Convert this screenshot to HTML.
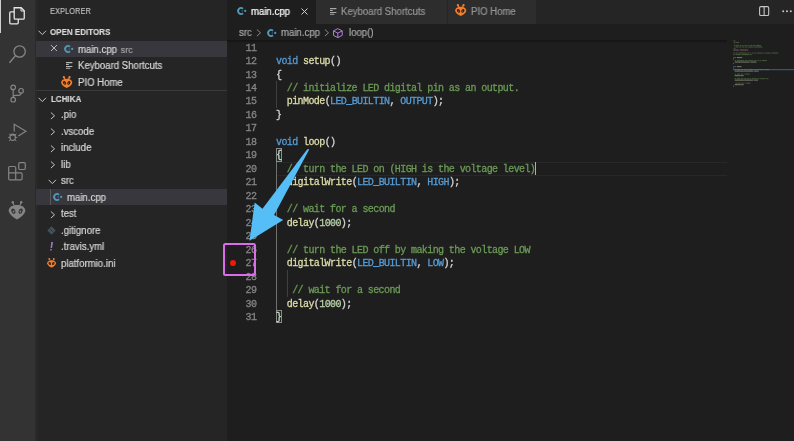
<!DOCTYPE html><html><head><meta charset="utf-8"><style>
*{margin:0;padding:0;box-sizing:border-box}
html,body{width:794px;height:441px;overflow:hidden;background:#1e1e1e}
body{position:relative;font-family:"Liberation Sans",sans-serif}
.st,.hdr,.mono,.gs{will-change:transform}
.abs{position:absolute}
svg{position:absolute;overflow:visible}
.tab{position:absolute;top:0;height:23.5px;background:#2d2d2d}
.st{position:absolute;white-space:nowrap;color:#d8d8d8;font-size:10px;line-height:12px;transform-origin:0 0;transform:scaleX(0.96);-webkit-text-stroke:0.2px}
.hdr{position:absolute;white-space:nowrap;color:#dadada;font-size:8.8px;font-weight:bold;line-height:10px;transform-origin:0 0;transform:scaleX(0.91);-webkit-text-stroke:0.15px}
.row{position:absolute;left:36px;width:191px;height:16.42px}
.ln{position:absolute;left:227px;width:29.3px;text-align:right;color:#858585;white-space:pre}
.cd{position:absolute;left:276.3px;white-space:pre;color:#d4d4d4}
.mono{font-family:"Liberation Mono",monospace;font-size:10px;letter-spacing:-0.6px;line-height:13.47px;height:13.47px;padding-top:1px;-webkit-text-stroke:0.3px}
.k{color:#569cd6}.f{color:#dcdcaa}.c{color:#6a9955}.m{color:#569cd6}.n{color:#b5cea8}
</style></head><body>
<div class="abs" style="left:0;top:0;width:36px;height:441px;background:#333333"></div>
<div class="abs" style="left:0;top:0;width:1.3px;height:33px;background:#d0d0d0"></div>
<div class="abs" style="left:36px;top:0;width:191px;height:441px;background:#252526"></div>
<div class="abs" style="left:35px;top:0;width:2px;height:441px;background:#2a2a2a"></div>
<div class="abs" style="left:227px;top:0;width:567px;height:23.5px;background:#252526"></div>
<div class="tab" style="left:227px;width:89px;background:#1e1e1e"></div>
<div class="tab" style="left:316px;width:131px"></div>
<div class="tab" style="left:448px;width:88px"></div>
<div class="abs gs" style="left:50.4px;top:5.6px;font-size:9px;color:#c4c4c4;line-height:10px;white-space:nowrap;transform-origin:0 0;transform:scaleX(0.835);-webkit-text-stroke:0.1px">EXPLORER</div>
<svg style="left:38.3px;top:29.5px" width="9" height="6" viewBox="0 0 9 6"><path d="M0.6 0.8 L4.3 4.6 L8 0.8" fill="none" stroke="#c5c5c5" stroke-width="1"/></svg>
<div class="hdr" style="left:50.4px;top:27.3px">OPEN EDITORS</div>
<div class="row" style="top:40.60px;background:#37373d"></div>
<svg style="left:50.1px;top:44px" width="8" height="8" viewBox="0 0 8 8"><path d="M1 1.1L6.9 7M6.9 1.1L1 7" stroke="#c5c5c5" stroke-width="0.95"/></svg>
<svg style="left:64.2px;top:43.8px" width="10" height="10" viewBox="0 0 10 10"><path d="M6 2.74 A2.95 2.95 0 1 0 6 7.26" fill="none" stroke="#519aba" stroke-width="1.8"/><circle cx="5.3" cy="5" r="0.8" fill="#519aba" opacity="0.55"/><circle cx="8.2" cy="4.9" r="1.1" fill="#519aba"/></svg>
<div class="st" style="left:77.9px;top:43.60px">main.cpp<span style="color:#a0a0a0;font-size:9.2px;margin-left:4px">src</span></div>
<svg style="left:66px;top:62.37px" width="7" height="7" viewBox="0 0 7 7"><path d="M0 0.6h6.4M0 2.5h2.8M0 4.4h6.4M0 6.3h4.3" stroke="#b8b8b8" stroke-width="1.05"/></svg>
<div class="st" style="left:77.9px;top:60.07px">Keyboard Shortcuts</div>
<svg style="left:60.9px;top:75.5px" width="11.40" height="12.20" viewBox="0 0 12 13"><path d="M3 1.4 L4 3.4 M9 1.4 L8 3.4" stroke="#f08030" stroke-width="1.3"/><circle cx="3" cy="1.3" r="1.2" fill="#f08030"/><circle cx="9" cy="1.3" r="1.2" fill="#f08030"/><path d="M6 3 C9.6 3 11.9 4.8 11.9 7 C11.9 9.4 8.6 11.9 6 12.8 C3.4 11.9 0.1 9.4 0.1 7 C0.1 4.8 2.4 3 6 3Z" fill="#f08030"/><ellipse cx="3.7" cy="7.3" rx="1.5" ry="2.1" fill="#2a1a12" transform="rotate(-35 3.7 7.3)"/><ellipse cx="8.3" cy="7.3" rx="1.5" ry="2.1" fill="#2a1a12" transform="rotate(35 8.3 7.3)"/><circle cx="3.9" cy="7.6" r="0.6" fill="#c06a2a"/><circle cx="8.1" cy="7.6" r="0.6" fill="#c06a2a"/></svg>
<div class="st" style="left:77.9px;top:76.54px">PIO Home</div>
<div class="abs" style="left:36px;top:90.01px;width:191px;height:1px;background:#3a3a3a"></div>
<svg style="left:38.3px;top:96.80999999999999px" width="9" height="6" viewBox="0 0 9 6"><path d="M0.6 0.8 L4.3 4.6 L8 0.8" fill="none" stroke="#c5c5c5" stroke-width="1"/></svg>
<div class="hdr" style="left:50.6px;top:94.41px">LCHIKA</div>
<svg style="left:50px;top:111.97999999999999px" width="6" height="8" viewBox="0 0 6 8"><path d="M0.9 0.5 L4.5 3.8 L0.9 7.1" fill="none" stroke="#c5c5c5" stroke-width="1"/></svg>
<div class="st" style="left:60.9px;top:109.48px">.pio</div>
<svg style="left:50px;top:128.45px" width="6" height="8" viewBox="0 0 6 8"><path d="M0.9 0.5 L4.5 3.8 L0.9 7.1" fill="none" stroke="#c5c5c5" stroke-width="1"/></svg>
<div class="st" style="left:60.9px;top:125.95px">.vscode</div>
<svg style="left:50px;top:144.92px" width="6" height="8" viewBox="0 0 6 8"><path d="M0.9 0.5 L4.5 3.8 L0.9 7.1" fill="none" stroke="#c5c5c5" stroke-width="1"/></svg>
<div class="st" style="left:60.9px;top:142.42px">include</div>
<svg style="left:50px;top:161.39px" width="6" height="8" viewBox="0 0 6 8"><path d="M0.9 0.5 L4.5 3.8 L0.9 7.1" fill="none" stroke="#c5c5c5" stroke-width="1"/></svg>
<div class="st" style="left:60.9px;top:158.89px">lib</div>
<svg style="left:50px;top:210.79999999999998px" width="6" height="8" viewBox="0 0 6 8"><path d="M0.9 0.5 L4.5 3.8 L0.9 7.1" fill="none" stroke="#c5c5c5" stroke-width="1"/></svg>
<div class="st" style="left:60.9px;top:208.30px">test</div>
<svg style="left:48.2px;top:178.55999999999997px" width="9" height="6" viewBox="0 0 9 6"><path d="M0.6 0.8 L4.3 4.6 L8 0.8" fill="none" stroke="#c5c5c5" stroke-width="1"/></svg>
<div class="st" style="left:60.9px;top:175.36px">src</div>
<div class="row" style="top:188.83px;background:#37373d"></div>
<div class="abs" style="left:50px;top:188.83px;width:0.8px;height:16.4px;background:#585858"></div>
<svg style="left:53.4px;top:192.23px" width="10" height="10" viewBox="0 0 10 10"><path d="M6 2.74 A2.95 2.95 0 1 0 6 7.26" fill="none" stroke="#519aba" stroke-width="1.8"/><circle cx="5.3" cy="5" r="0.8" fill="#519aba" opacity="0.55"/><circle cx="8.2" cy="4.9" r="1.1" fill="#519aba"/></svg>
<div class="st" style="left:67px;top:191.83px">main.cpp</div>
<svg style="left:47px;top:226.27px" width="9" height="9" viewBox="0 0 9 9"><path d="M4.5 0.3 L8.7 4.5 L4.5 8.7 L0.3 4.5Z" fill="#41535b"/><path d="M3 3 L5.5 5.5" stroke="#252526" stroke-width="0.8"/></svg>
<div class="st" style="left:60.9px;top:224.77px">.gitignore</div>
<svg style="left:49.3px;top:241.44px" width="6" height="11" viewBox="0 0 6 11"><path d="M2.2 1 H4 L3.1 6.9 H1.6 Z" fill="#a074c4"/><path d="M1.3 7.9 H2.9 L2.7 9.6 H1.1 Z" fill="#a074c4"/></svg>
<div class="st" style="left:60.9px;top:241.24px">.travis.yml</div>
<svg style="left:46.8px;top:258.31px" width="9.12" height="9.76" viewBox="0 0 12 13"><path d="M3 1.4 L4 3.4 M9 1.4 L8 3.4" stroke="#f08030" stroke-width="1.3"/><circle cx="3" cy="1.3" r="1.2" fill="#f08030"/><circle cx="9" cy="1.3" r="1.2" fill="#f08030"/><path d="M6 3 C9.6 3 11.9 4.8 11.9 7 C11.9 9.4 8.6 11.9 6 12.8 C3.4 11.9 0.1 9.4 0.1 7 C0.1 4.8 2.4 3 6 3Z" fill="#f08030"/><ellipse cx="3.7" cy="7.3" rx="1.5" ry="2.1" fill="#2a1a12" transform="rotate(-35 3.7 7.3)"/><ellipse cx="8.3" cy="7.3" rx="1.5" ry="2.1" fill="#2a1a12" transform="rotate(35 8.3 7.3)"/><circle cx="3.9" cy="7.6" r="0.6" fill="#c06a2a"/><circle cx="8.1" cy="7.6" r="0.6" fill="#c06a2a"/></svg>
<div class="st" style="left:60.9px;top:257.71px">platformio.ini</div>
<svg style="left:237.4px;top:6.3px" width="10" height="10" viewBox="0 0 10 10"><path d="M6 2.74 A2.95 2.95 0 1 0 6 7.26" fill="none" stroke="#519aba" stroke-width="1.8"/><circle cx="5.3" cy="5" r="0.8" fill="#519aba" opacity="0.55"/><circle cx="8.2" cy="4.9" r="1.1" fill="#519aba"/></svg>
<div class="st" style="left:251px;top:6.2px;color:#ffffff">main.cpp</div>
<svg style="left:300.5px;top:8px" width="7" height="7" viewBox="0 0 7 7"><path d="M0.5 0.5L6.5 6.5M6.5 0.5L0.5 6.5" stroke="#d0d0d0" stroke-width="1"/></svg>
<svg style="left:329.7px;top:8px" width="7" height="7" viewBox="0 0 7 7"><path d="M0 0.6h6.4M0 2.5h2.8M0 4.4h6.4M0 6.3h4.3" stroke="#a8a8a8" stroke-width="1.05"/></svg>
<div class="st" style="left:341px;top:6.3px;color:#969696">Keyboard Shortcuts</div>
<svg style="left:455.3px;top:3.9px" width="11.40" height="12.20" viewBox="0 0 12 13"><path d="M3 1.4 L4 3.4 M9 1.4 L8 3.4" stroke="#f08030" stroke-width="1.3"/><circle cx="3" cy="1.3" r="1.2" fill="#f08030"/><circle cx="9" cy="1.3" r="1.2" fill="#f08030"/><path d="M6 3 C9.6 3 11.9 4.8 11.9 7 C11.9 9.4 8.6 11.9 6 12.8 C3.4 11.9 0.1 9.4 0.1 7 C0.1 4.8 2.4 3 6 3Z" fill="#f08030"/><ellipse cx="3.7" cy="7.3" rx="1.5" ry="2.1" fill="#2a1a12" transform="rotate(-35 3.7 7.3)"/><ellipse cx="8.3" cy="7.3" rx="1.5" ry="2.1" fill="#2a1a12" transform="rotate(35 8.3 7.3)"/><circle cx="3.9" cy="7.6" r="0.6" fill="#c06a2a"/><circle cx="8.1" cy="7.6" r="0.6" fill="#c06a2a"/></svg>
<div class="st" style="left:471.3px;top:6.3px;color:#969696">PIO Home</div>
<svg style="left:758.6px;top:5.9px" width="11" height="11" viewBox="0 0 11 11"><rect x="0.6" y="0.6" width="9.1" height="8.9" rx="1.3" fill="none" stroke="#c5c5c5" stroke-width="1.1"/><path d="M5.15 0.6V9.5" stroke="#c5c5c5" stroke-width="1.1"/></svg>
<svg style="left:782px;top:10px" width="11" height="3" viewBox="0 0 11 3"><circle cx="1.2" cy="1.2" r="1" fill="#c5c5c5"/><circle cx="5" cy="1.2" r="1" fill="#c5c5c5"/><circle cx="8.8" cy="1.2" r="1" fill="#c5c5c5"/></svg>
<div class="st" style="left:238.8px;top:26.6px;color:#a9a9a9">src</div>
<svg style="left:256px;top:28.5px" width="6" height="8" viewBox="0 0 6 8"><path d="M0.9 0.5 L4.5 3.8 L0.9 7.1" fill="none" stroke="#8a8a8a" stroke-width="1"/></svg>
<svg style="left:266.8px;top:28px" width="10" height="10" viewBox="0 0 10 10"><path d="M6 2.74 A2.95 2.95 0 1 0 6 7.26" fill="none" stroke="#519aba" stroke-width="1.8"/><circle cx="5.3" cy="5" r="0.8" fill="#519aba" opacity="0.55"/><circle cx="8.2" cy="4.9" r="1.1" fill="#519aba"/></svg>
<div class="st" style="left:280.5px;top:26.6px;color:#a9a9a9">main.cpp</div>
<svg style="left:324px;top:28.5px" width="6" height="8" viewBox="0 0 6 8"><path d="M0.9 0.5 L4.5 3.8 L0.9 7.1" fill="none" stroke="#8a8a8a" stroke-width="1"/></svg>
<svg style="left:333px;top:28px" width="10" height="10" viewBox="0 0 10 10"><path d="M4.8 0.6 L9.2 2.9 V7.4 L4.8 9.6 L0.5 7.4 V2.9Z M0.5 2.9 L4.8 5.1 L9.2 2.9 M4.8 5.1V9.6" fill="none" stroke="#b180d7" stroke-width="1"/></svg>
<div class="st" style="left:348.5px;top:26.6px;color:#a9a9a9">loop()</div>
<div class="abs" style="left:227px;top:40.4px;width:500px;height:2.6px;background:linear-gradient(#151515,#171717 45%,#1e1e1e)"></div>
<div class="abs" style="left:277px;top:162.43px;width:450px;height:1px;background:#282828"></div>
<div class="abs" style="left:277px;top:174.63px;width:450px;height:1px;background:#282828"></div>
<div class="abs" style="left:276.3px;top:81.01px;width:1px;height:26.94px;background:#404040"></div>
<div class="abs" style="left:276.3px;top:161.83px;width:1px;height:148.17px;background:#707070"></div>
<div class="abs" style="left:286.9px;top:269.59px;width:1px;height:26.94px;background:#404040"></div>
<div class="abs" style="left:275.7px;top:148.06px;width:6.4px;height:13.6px;border:1px solid #8c8c8c;background:#0f2a16"></div>
<div class="abs" style="left:275.7px;top:309.70px;width:6.4px;height:13.6px;border:1px solid #8c8c8c;background:#0f2a16"></div>
<div class="ln mono" style="top:40.60px">11</div>
<div class="ln mono" style="top:54.07px">12</div>
<div class="cd mono" style="top:54.07px"><span class="k">void</span> <span class="f">setup</span>()</div>
<div class="ln mono" style="top:67.54px">13</div>
<div class="cd mono" style="top:67.54px">{</div>
<div class="ln mono" style="top:81.01px">14</div>
<div class="cd mono" style="top:81.01px">  <span class="c">// initialize LED digital pin as an output.</span></div>
<div class="ln mono" style="top:94.48px">15</div>
<div class="cd mono" style="top:94.48px">  <span class="f">pinMode</span>(<span class="m">LED_BUILTIN</span>, <span class="m">OUTPUT</span>);</div>
<div class="ln mono" style="top:107.95px">16</div>
<div class="cd mono" style="top:107.95px">}</div>
<div class="ln mono" style="top:121.42px">17</div>
<div class="ln mono" style="top:134.89px">18</div>
<div class="cd mono" style="top:134.89px"><span class="k">void</span> <span class="f">loop</span>()</div>
<div class="ln mono" style="top:148.36px">19</div>
<div class="cd mono" style="top:148.36px">{</div>
<div class="ln mono" style="top:161.83px">20</div>
<div class="cd mono" style="top:161.83px">  <span class="c">// turn the LED on (HIGH is the voltage level)</span></div>
<div class="ln mono" style="top:175.30px">21</div>
<div class="cd mono" style="top:175.30px">  <span class="f">digitalWrite</span>(<span class="m">LED_BUILTIN</span>, <span class="m">HIGH</span>);</div>
<div class="ln mono" style="top:188.77px">22</div>
<div class="ln mono" style="top:202.24px">23</div>
<div class="cd mono" style="top:202.24px">  <span class="c">// wait for a second</span></div>
<div class="ln mono" style="top:215.71px">24</div>
<div class="cd mono" style="top:215.71px">  <span class="f">delay</span>(<span class="n">1000</span>);</div>
<div class="ln mono" style="top:229.18px">25</div>
<div class="ln mono" style="top:242.65px">26</div>
<div class="cd mono" style="top:242.65px">  <span class="c">// turn the LED off by making the voltage LOW</span></div>
<div class="ln mono" style="top:256.12px">27</div>
<div class="cd mono" style="top:256.12px">  <span class="f">digitalWrite</span>(<span class="m">LED_BUILTIN</span>, <span class="m">LOW</span>);</div>
<div class="ln mono" style="top:269.59px">28</div>
<div class="ln mono" style="top:283.06px">29</div>
<div class="cd mono" style="top:283.06px">   <span class="c">// wait for a second</span></div>
<div class="ln mono" style="top:296.53px">30</div>
<div class="cd mono" style="top:296.53px">  <span class="f">delay</span>(<span class="n">1000</span>);</div>
<div class="ln mono" style="top:310.00px">31</div>
<div class="cd mono" style="top:310.00px">}</div>
<div class="abs" style="left:534.5px;top:162.43px;width:1.2px;height:12.4px;background:#aeafad"></div>
<svg style="left:8px;top:6px" width="18" height="20" viewBox="0 0 18 20"><path d="M6.2 1.75 H13.2 L16.25 4.8 V12.15 Q16.25 13.15 15.25 13.15 H7.2 Q6.2 13.15 6.2 12.15 Z" fill="none" stroke="#e6e6e6" stroke-width="1.3"/><path d="M13 1.75 V5 H16.25" fill="none" stroke="#e6e6e6" stroke-width="1"/><path d="M6.2 5.85 H2.75 Q1.75 5.85 1.75 6.85 V16.85 Q1.75 17.85 2.75 17.85 H9.25 Q10.25 17.85 10.25 16.85 V13.15" fill="none" stroke="#e6e6e6" stroke-width="1.3"/></svg>
<svg style="left:8px;top:45px" width="20" height="20" viewBox="0 0 20 20"><circle cx="11.6" cy="6.5" r="5.7" fill="none" stroke="#858585" stroke-width="1.3"/><path d="M7.5 10.6 L1.5 17.8" stroke="#858585" stroke-width="1.4"/></svg>
<svg style="left:8px;top:83px" width="20" height="22" viewBox="0 0 20 22"><circle cx="5.2" cy="4.4" r="2.3" fill="none" stroke="#858585" stroke-width="1.2"/><circle cx="5.2" cy="16.7" r="2.3" fill="none" stroke="#858585" stroke-width="1.2"/><circle cx="13.1" cy="7.8" r="2.3" fill="none" stroke="#858585" stroke-width="1.2"/><path d="M5.2 6.7 V14.4 M13.1 10.1 Q13.1 12.3 10.6 12.3 H7.4 Q5.4 12.3 5.2 14" fill="none" stroke="#858585" stroke-width="1.2"/></svg>
<svg style="left:7px;top:122px" width="22" height="22" viewBox="0 0 22 22"><path d="M7.2 9.6 V2.3 L18.9 9.2 L11.3 14.1" fill="none" stroke="#858585" stroke-width="1.2"/><ellipse cx="5.7" cy="15.3" rx="2.7" ry="3.2" fill="none" stroke="#858585" stroke-width="1.1"/><path d="M3.4 13.8 Q5.7 12.2 8 13.8 M2 11.8 L3.5 13 M9.4 11.8 L7.9 13 M1.2 15.4 H3 M8.4 15.4 H10.2 M2 19 L3.4 17.8 M9.4 19 L8 17.8" fill="none" stroke="#858585" stroke-width="1"/></svg>
<svg style="left:7px;top:161px" width="22" height="22" viewBox="0 0 22 22"><path d="M1.7 6.7 Q1.7 5.5 2.9 5.5 H7.5 Q8.7 5.5 8.7 6.7 V11.9 H13.9 Q15.1 11.9 15.1 13.1 V17.7 Q15.1 18.9 13.9 18.9 H2.9 Q1.7 18.9 1.7 17.7 Z M1.7 11.9 H8.7 V18.9" fill="none" stroke="#858585" stroke-width="1.2"/><rect x="11.7" y="1.7" width="6.6" height="6.8" rx="1.2" fill="none" stroke="#858585" stroke-width="1.2"/></svg>
<svg style="left:9px;top:200px" width="18" height="20" viewBox="0 0 18 20"><path d="M3.8 2.4 L5 5.4 M12.2 2.4 L11 5.4" stroke="#858585" stroke-width="1.1"/><circle cx="3.8" cy="2.3" r="1.2" fill="#858585"/><circle cx="12.2" cy="2.3" r="1.2" fill="#858585"/><path d="M8 4.9 C13 4.9 16.3 7.3 16.3 10.6 C16.3 14 11.6 17.8 8 19.5 C4.4 17.8 -0.3 14 -0.3 10.6 C-0.3 7.3 3 4.9 8 4.9Z" fill="#858585"/><ellipse cx="4.4" cy="11.2" rx="1.9" ry="2.7" fill="#333333" transform="rotate(-30 4.4 11.2)"/><ellipse cx="11.6" cy="11.2" rx="1.9" ry="2.7" fill="#333333" transform="rotate(30 11.6 11.2)"/><circle cx="4.6" cy="11.5" r="0.9" fill="#858585"/><circle cx="11.4" cy="11.5" r="0.9" fill="#858585"/></svg>
<svg style="left:0;top:0" width="794" height="441" viewBox="0 0 794 441"><rect x="733" y="69.01" width="61" height="1.2" fill="#2b64a0" opacity="0.85"/><rect x="733.20" y="40.45" width="2.25" height="1.1" fill="#6a9955" opacity="0.45"/><rect x="733.95" y="41.96" width="0.75" height="1.1" fill="#6a9955" opacity="0.45"/><rect x="735.45" y="41.96" width="3.75" height="1.1" fill="#6a9955" opacity="0.45"/><rect x="733.95" y="43.46" width="0.75" height="1.1" fill="#6a9955" opacity="0.45"/><rect x="733.95" y="44.97" width="0.75" height="1.1" fill="#6a9955" opacity="0.45"/><rect x="735.45" y="44.97" width="3.75" height="1.1" fill="#6a9955" opacity="0.45"/><rect x="739.95" y="44.97" width="1.50" height="1.1" fill="#6a9955" opacity="0.45"/><rect x="742.20" y="44.97" width="1.50" height="1.1" fill="#6a9955" opacity="0.45"/><rect x="744.45" y="44.97" width="2.25" height="1.1" fill="#6a9955" opacity="0.45"/><rect x="747.45" y="44.97" width="1.50" height="1.1" fill="#6a9955" opacity="0.45"/><rect x="749.70" y="44.97" width="2.25" height="1.1" fill="#6a9955" opacity="0.45"/><rect x="752.70" y="44.97" width="2.25" height="1.1" fill="#6a9955" opacity="0.45"/><rect x="755.70" y="44.97" width="5.25" height="1.1" fill="#6a9955" opacity="0.45"/><rect x="733.95" y="46.47" width="0.75" height="1.1" fill="#6a9955" opacity="0.45"/><rect x="735.45" y="46.47" width="3.00" height="1.1" fill="#6a9955" opacity="0.45"/><rect x="739.20" y="46.47" width="2.25" height="1.1" fill="#6a9955" opacity="0.45"/><rect x="742.20" y="46.47" width="2.25" height="1.1" fill="#6a9955" opacity="0.45"/><rect x="745.20" y="46.47" width="2.25" height="1.1" fill="#6a9955" opacity="0.45"/><rect x="748.20" y="46.47" width="5.25" height="1.1" fill="#6a9955" opacity="0.45"/><rect x="754.20" y="46.47" width="8.25" height="1.1" fill="#6a9955" opacity="0.45"/><rect x="733.95" y="47.98" width="1.50" height="1.1" fill="#6a9955" opacity="0.45"/><rect x="733.20" y="49.49" width="6.00" height="1.1" fill="#c586c0" opacity="0.45"/><rect x="739.95" y="49.49" width="8.25" height="1.1" fill="#ce9178" opacity="0.45"/><rect x="733.20" y="52.50" width="1.50" height="1.1" fill="#6a9955" opacity="0.45"/><rect x="735.45" y="52.50" width="2.25" height="1.1" fill="#6a9955" opacity="0.45"/><rect x="738.45" y="52.50" width="8.25" height="1.1" fill="#6a9955" opacity="0.45"/><rect x="747.45" y="52.50" width="1.50" height="1.1" fill="#6a9955" opacity="0.45"/><rect x="749.70" y="52.50" width="1.50" height="1.1" fill="#6a9955" opacity="0.45"/><rect x="751.95" y="52.50" width="1.50" height="1.1" fill="#6a9955" opacity="0.45"/><rect x="754.20" y="52.50" width="2.25" height="1.1" fill="#6a9955" opacity="0.45"/><rect x="757.20" y="52.50" width="5.25" height="1.1" fill="#6a9955" opacity="0.45"/><rect x="763.20" y="52.50" width="1.50" height="1.1" fill="#6a9955" opacity="0.45"/><rect x="765.45" y="52.50" width="5.25" height="1.1" fill="#6a9955" opacity="0.45"/><rect x="771.45" y="52.50" width="6.75" height="1.1" fill="#6a9955" opacity="0.45"/><rect x="733.20" y="54.00" width="1.50" height="1.1" fill="#6a9955" opacity="0.45"/><rect x="735.45" y="54.00" width="5.25" height="1.1" fill="#6a9955" opacity="0.45"/><rect x="741.45" y="54.00" width="8.25" height="1.1" fill="#6a9955" opacity="0.45"/><rect x="750.45" y="54.00" width="1.50" height="1.1" fill="#6a9955" opacity="0.45"/><rect x="733.20" y="57.02" width="3.00" height="1.1" fill="#569cd6" opacity="0.45"/><rect x="736.95" y="57.02" width="3.75" height="1.1" fill="#dcdcaa" opacity="0.45"/><rect x="740.70" y="57.02" width="1.50" height="1.1" fill="#d4d4d4" opacity="0.45"/><rect x="733.20" y="58.52" width="0.75" height="1.1" fill="#d4d4d4" opacity="0.45"/><rect x="734.70" y="60.03" width="1.50" height="1.1" fill="#6a9955" opacity="0.45"/><rect x="736.95" y="60.03" width="7.50" height="1.1" fill="#6a9955" opacity="0.45"/><rect x="745.20" y="60.03" width="2.25" height="1.1" fill="#6a9955" opacity="0.45"/><rect x="748.20" y="60.03" width="5.25" height="1.1" fill="#6a9955" opacity="0.45"/><rect x="754.20" y="60.03" width="2.25" height="1.1" fill="#6a9955" opacity="0.45"/><rect x="757.20" y="60.03" width="1.50" height="1.1" fill="#6a9955" opacity="0.45"/><rect x="759.45" y="60.03" width="1.50" height="1.1" fill="#6a9955" opacity="0.45"/><rect x="761.70" y="60.03" width="5.25" height="1.1" fill="#6a9955" opacity="0.45"/><rect x="734.70" y="61.53" width="5.25" height="1.1" fill="#dcdcaa" opacity="0.45"/><rect x="739.95" y="61.53" width="0.75" height="1.1" fill="#d4d4d4" opacity="0.45"/><rect x="740.70" y="61.53" width="8.25" height="1.1" fill="#d8d8c0" opacity="0.45"/><rect x="748.95" y="61.53" width="0.75" height="1.1" fill="#d4d4d4" opacity="0.45"/><rect x="750.45" y="61.53" width="4.50" height="1.1" fill="#d8d8c0" opacity="0.45"/><rect x="754.95" y="61.53" width="1.50" height="1.1" fill="#d4d4d4" opacity="0.45"/><rect x="733.20" y="63.04" width="0.75" height="1.1" fill="#d4d4d4" opacity="0.45"/><rect x="733.20" y="66.05" width="3.00" height="1.1" fill="#569cd6" opacity="0.45"/><rect x="736.95" y="66.05" width="3.00" height="1.1" fill="#dcdcaa" opacity="0.45"/><rect x="739.95" y="66.05" width="1.50" height="1.1" fill="#d4d4d4" opacity="0.45"/><rect x="733.20" y="67.56" width="0.75" height="1.1" fill="#d4d4d4" opacity="0.45"/><rect x="734.70" y="69.06" width="1.50" height="1.1" fill="#6a9955" opacity="0.45"/><rect x="736.95" y="69.06" width="3.00" height="1.1" fill="#6a9955" opacity="0.45"/><rect x="740.70" y="69.06" width="2.25" height="1.1" fill="#6a9955" opacity="0.45"/><rect x="743.70" y="69.06" width="2.25" height="1.1" fill="#6a9955" opacity="0.45"/><rect x="746.70" y="69.06" width="1.50" height="1.1" fill="#6a9955" opacity="0.45"/><rect x="748.95" y="69.06" width="3.75" height="1.1" fill="#6a9955" opacity="0.45"/><rect x="753.45" y="69.06" width="1.50" height="1.1" fill="#6a9955" opacity="0.45"/><rect x="755.70" y="69.06" width="2.25" height="1.1" fill="#6a9955" opacity="0.45"/><rect x="758.70" y="69.06" width="5.25" height="1.1" fill="#6a9955" opacity="0.45"/><rect x="764.70" y="69.06" width="4.50" height="1.1" fill="#6a9955" opacity="0.45"/><rect x="734.70" y="70.57" width="9.00" height="1.1" fill="#dcdcaa" opacity="0.45"/><rect x="743.70" y="70.57" width="0.75" height="1.1" fill="#d4d4d4" opacity="0.45"/><rect x="744.45" y="70.57" width="8.25" height="1.1" fill="#d8d8c0" opacity="0.45"/><rect x="752.70" y="70.57" width="0.75" height="1.1" fill="#d4d4d4" opacity="0.45"/><rect x="754.20" y="70.57" width="3.00" height="1.1" fill="#d8d8c0" opacity="0.45"/><rect x="757.20" y="70.57" width="1.50" height="1.1" fill="#d4d4d4" opacity="0.45"/><rect x="734.70" y="73.58" width="1.50" height="1.1" fill="#6a9955" opacity="0.45"/><rect x="736.95" y="73.58" width="3.00" height="1.1" fill="#6a9955" opacity="0.45"/><rect x="740.70" y="73.58" width="2.25" height="1.1" fill="#6a9955" opacity="0.45"/><rect x="743.70" y="73.58" width="0.75" height="1.1" fill="#6a9955" opacity="0.45"/><rect x="745.20" y="73.58" width="4.50" height="1.1" fill="#6a9955" opacity="0.45"/><rect x="734.70" y="75.09" width="3.75" height="1.1" fill="#dcdcaa" opacity="0.45"/><rect x="738.45" y="75.09" width="0.75" height="1.1" fill="#d4d4d4" opacity="0.45"/><rect x="739.20" y="75.09" width="3.00" height="1.1" fill="#b5cea8" opacity="0.45"/><rect x="742.20" y="75.09" width="1.50" height="1.1" fill="#d4d4d4" opacity="0.45"/><rect x="734.70" y="78.10" width="1.50" height="1.1" fill="#6a9955" opacity="0.45"/><rect x="736.95" y="78.10" width="3.00" height="1.1" fill="#6a9955" opacity="0.45"/><rect x="740.70" y="78.10" width="2.25" height="1.1" fill="#6a9955" opacity="0.45"/><rect x="743.70" y="78.10" width="2.25" height="1.1" fill="#6a9955" opacity="0.45"/><rect x="746.70" y="78.10" width="2.25" height="1.1" fill="#6a9955" opacity="0.45"/><rect x="749.70" y="78.10" width="1.50" height="1.1" fill="#6a9955" opacity="0.45"/><rect x="751.95" y="78.10" width="4.50" height="1.1" fill="#6a9955" opacity="0.45"/><rect x="757.20" y="78.10" width="2.25" height="1.1" fill="#6a9955" opacity="0.45"/><rect x="760.20" y="78.10" width="5.25" height="1.1" fill="#6a9955" opacity="0.45"/><rect x="766.20" y="78.10" width="2.25" height="1.1" fill="#6a9955" opacity="0.45"/><rect x="734.70" y="79.61" width="9.00" height="1.1" fill="#dcdcaa" opacity="0.45"/><rect x="743.70" y="79.61" width="0.75" height="1.1" fill="#d4d4d4" opacity="0.45"/><rect x="744.45" y="79.61" width="8.25" height="1.1" fill="#d8d8c0" opacity="0.45"/><rect x="752.70" y="79.61" width="0.75" height="1.1" fill="#d4d4d4" opacity="0.45"/><rect x="754.20" y="79.61" width="2.25" height="1.1" fill="#d8d8c0" opacity="0.45"/><rect x="756.45" y="79.61" width="1.50" height="1.1" fill="#d4d4d4" opacity="0.45"/><rect x="735.45" y="82.62" width="1.50" height="1.1" fill="#6a9955" opacity="0.45"/><rect x="737.70" y="82.62" width="3.00" height="1.1" fill="#6a9955" opacity="0.45"/><rect x="741.45" y="82.62" width="2.25" height="1.1" fill="#6a9955" opacity="0.45"/><rect x="744.45" y="82.62" width="0.75" height="1.1" fill="#6a9955" opacity="0.45"/><rect x="745.95" y="82.62" width="4.50" height="1.1" fill="#6a9955" opacity="0.45"/><rect x="734.70" y="84.12" width="3.75" height="1.1" fill="#dcdcaa" opacity="0.45"/><rect x="738.45" y="84.12" width="0.75" height="1.1" fill="#d4d4d4" opacity="0.45"/><rect x="739.20" y="84.12" width="3.00" height="1.1" fill="#b5cea8" opacity="0.45"/><rect x="742.20" y="84.12" width="1.50" height="1.1" fill="#d4d4d4" opacity="0.45"/><rect x="733.20" y="85.63" width="0.75" height="1.1" fill="#d4d4d4" opacity="0.45"/></svg>
<div class="abs" style="left:222.8px;top:243.1px;width:33.2px;height:33.3px;border:2px solid #d86fe8;border-radius:2.5px"></div>
<div class="abs" style="left:230.4px;top:259.8px;width:6px;height:6px;border-radius:50%;background:#f0180a"></div>
<svg style="left:0;top:0" width="794" height="441" viewBox="0 0 794 441"><path d="M307.1 149.6 Q308.4 148.2 309.2 149.6 L274.1 215 L283.2 220 L249.5 240.7 L254.7 202.5 L262.5 208.8 Z" fill="#55bef6"/></svg>
</body></html>
